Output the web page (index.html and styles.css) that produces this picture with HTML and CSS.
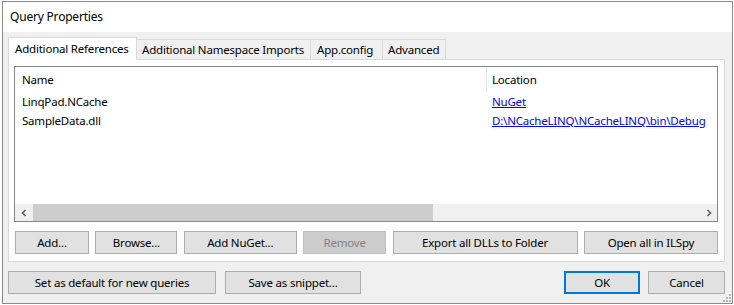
FILE: index.html
```html
<!DOCTYPE html>
<html lang="en">
<head>
  <meta charset="UTF-8">
  <title>Query Properties</title>
  <link rel="stylesheet" href="styles.css">
</head>
<body>
<div class="window">
  <div class="titlebar">Query Properties</div>

  <div class="client">
    <div class="tabs">
      <div class="tab selected t1">Additional References</div>
      <div class="tab t2">Additional Namespace Imports</div>
      <div class="tab t3">App.config</div>
      <div class="tab t4">Advanced</div>
    </div>

    <div class="panel">
      <div class="list">
        <div class="list-head">
          <div class="col-name">Name</div>
          <div class="col-loc">Location</div>
        </div>
        <div class="list-body">
          <div class="list-row">
            <div class="col-name">LinqPad.NCache</div>
            <div class="col-loc"><a href="#">NuGet</a></div>
          </div>
          <div class="list-row">
            <div class="col-name">SampleData.dll</div>
            <div class="col-loc"><a href="#">D:\NCacheLINQ\NCacheLINQ\bin\Debug</a></div>
          </div>
        </div>
        <div class="hscroll">
          <div class="arrow">
            <svg width="8" height="8" viewBox="0 0 8 8"><path d="M5.5 1 L2.5 4 L5.5 7" fill="none" stroke="#606060" stroke-width="1.6"/></svg>
          </div>
          <div class="track"><div class="thumb"></div></div>
          <div class="arrow">
            <svg width="8" height="8" viewBox="0 0 8 8"><path d="M2.5 1 L5.5 4 L2.5 7" fill="none" stroke="#606060" stroke-width="1.6"/></svg>
          </div>
        </div>
      </div>

      <div class="btn-row">
        <button class="btn w-add">Add...</button>
        <button class="btn w-browse">Browse...</button>
        <button class="btn w-nuget">Add NuGet...</button>
        <button class="btn w-remove" disabled>Remove</button>
        <button class="btn w-export">Export all DLLs to Folder</button>
        <button class="btn w-ilspy">Open all in ILSpy</button>
      </div>
    </div>

    <div class="footer">
      <button class="btn w-default">Set as default for new queries</button>
      <button class="btn w-snippet">Save as snippet...</button>
      <div class="spacer"></div>
      <button class="btn btn-ok w-ok">OK</button>
      <button class="btn w-cancel">Cancel</button>
    </div>
  </div>

  <div class="grip">
    <svg width="8" height="8" viewBox="0 0 8 8" fill="#b8b8b8">
      <rect x="6" y="0" width="2" height="2"/>
      <rect x="3" y="3" width="2" height="2"/><rect x="6" y="3" width="2" height="2"/>
      <rect x="0" y="6" width="2" height="2"/><rect x="3" y="6" width="2" height="2"/><rect x="6" y="6" width="2" height="2"/>
    </svg>
  </div>
</div>
</body>
</html>
```

FILE: styles.css
```css
body {
  margin: 0;
  background: #ffffff;
  font-family: "Noto Sans", "Open Sans", sans-serif;
  font-size: 11.5px;
  letter-spacing: -0.2px;
  color: #000;
}
.window {
  position: relative;
  margin: 1px 0 0 2px;
  width: 731px;
  height: 303px;
  box-sizing: border-box;
  border: 1px solid #8a8a8a;
  display: flex;
  flex-direction: column;
}
.titlebar {
  height: 30px;
  background: #fff;
  padding-left: 7px;
  line-height: 30px;
  font-size: 12px;
}
.client {
  flex: 1;
  background: #f0f0f0;
  padding: 5px 6px 9px 5px;
  display: flex;
  flex-direction: column;
}
.tabs {
  display: flex;
  align-items: flex-end;
  height: 22px;
}
.tab {
  box-sizing: border-box;
  height: 20px;
  border: 1px solid #d9d9d9;
  border-bottom: none;
  border-left: none;
  background: #f0f0f0;
  padding-left: 5px;
  line-height: 19px;
  white-space: nowrap;
}
.tab.selected {
  height: 23px;
  margin-bottom: -1px;
  border-left: 1px solid #d9d9d9;
  background: #fff;
  padding-left: 6px;
  line-height: 21px;
  position: relative;
  z-index: 1;
}
.t1 { width: 129px; }
.t2 { width: 174px; }
.t3 { width: 72px; padding-left: 6px; }
.t4 { width: 63px; }

.panel {
  box-sizing: border-box;
  height: 203px;
  width: 717px;
  border: 1px solid #d9d9d9;
  background: #fff;
  padding: 6px 6px 7px 5px;
  display: flex;
  flex-direction: column;
}
.list {
  box-sizing: border-box;
  height: 156px;
  border: 1px solid #828790;
  display: flex;
  flex-direction: column;
  overflow: hidden;
}
.list-head {
  display: flex;
  height: 25px;
  line-height: 25px;
  flex-shrink: 0;
}
.list-head .col-loc {
  border-left: 1px solid #e5e5e5;
  padding-left: 5px;
}
.list-body {
  flex: 1;
}
.list-row {
  display: flex;
  height: 19px;
  line-height: 19px;
}
.col-name {
  box-sizing: border-box;
  width: 471px;
  padding-left: 7px;
  flex-shrink: 0;
  white-space: nowrap;
}
.col-loc {
  flex: 1;
  padding-left: 6px;
  white-space: nowrap;
  overflow: hidden;
}
.col-loc a {
  color: #0000ff;
}
.hscroll {
  height: 17px;
  background: #f0f0f0;
  display: flex;
  flex-shrink: 0;
}
.arrow {
  width: 17px;
  display: flex;
  align-items: center;
  justify-content: center;
}
.track {
  flex: 1;
  padding: 0 0 0 1px;
}
.thumb {
  width: 400px;
  height: 17px;
  background: #cdcdcd;
}
.btn-row {
  display: flex;
  justify-content: space-between;
  margin-top: 9px;
  padding-left: 1px;
}
.btn {
  box-sizing: border-box;
  height: 23px;
  padding: 0;
  font-family: inherit;
  font-size: 11.5px;
  letter-spacing: -0.2px;
  color: #000;
  background: #e1e1e1;
  border: 1px solid #adadad;
}
.btn:disabled {
  background: #cccccc;
  border-color: #bfbfbf;
  color: #838383;
}
.btn-ok {
  border: 2px solid #0078d7;
}
.w-add { width: 74px; }
.w-browse { width: 82px; }
.w-nuget { width: 113px; }
.w-remove { width: 83px; }
.w-export { width: 185px; }
.w-ilspy { width: 134px; }

.footer {
  display: flex;
  margin-top: 9px;
  width: 717px;
}
.footer .btn { margin-right: 9px; }
.footer .btn:last-child { margin-right: 0; }
.footer .btn-ok { margin-right: 8px; }
.spacer { flex: 1; }
.w-default { width: 208px; }
.w-snippet { width: 136px; }
.w-ok { width: 76px; }
.w-cancel { width: 77px; }

.grip {
  position: absolute;
  right: 1px;
  bottom: 1px;
  line-height: 0;
}
```
